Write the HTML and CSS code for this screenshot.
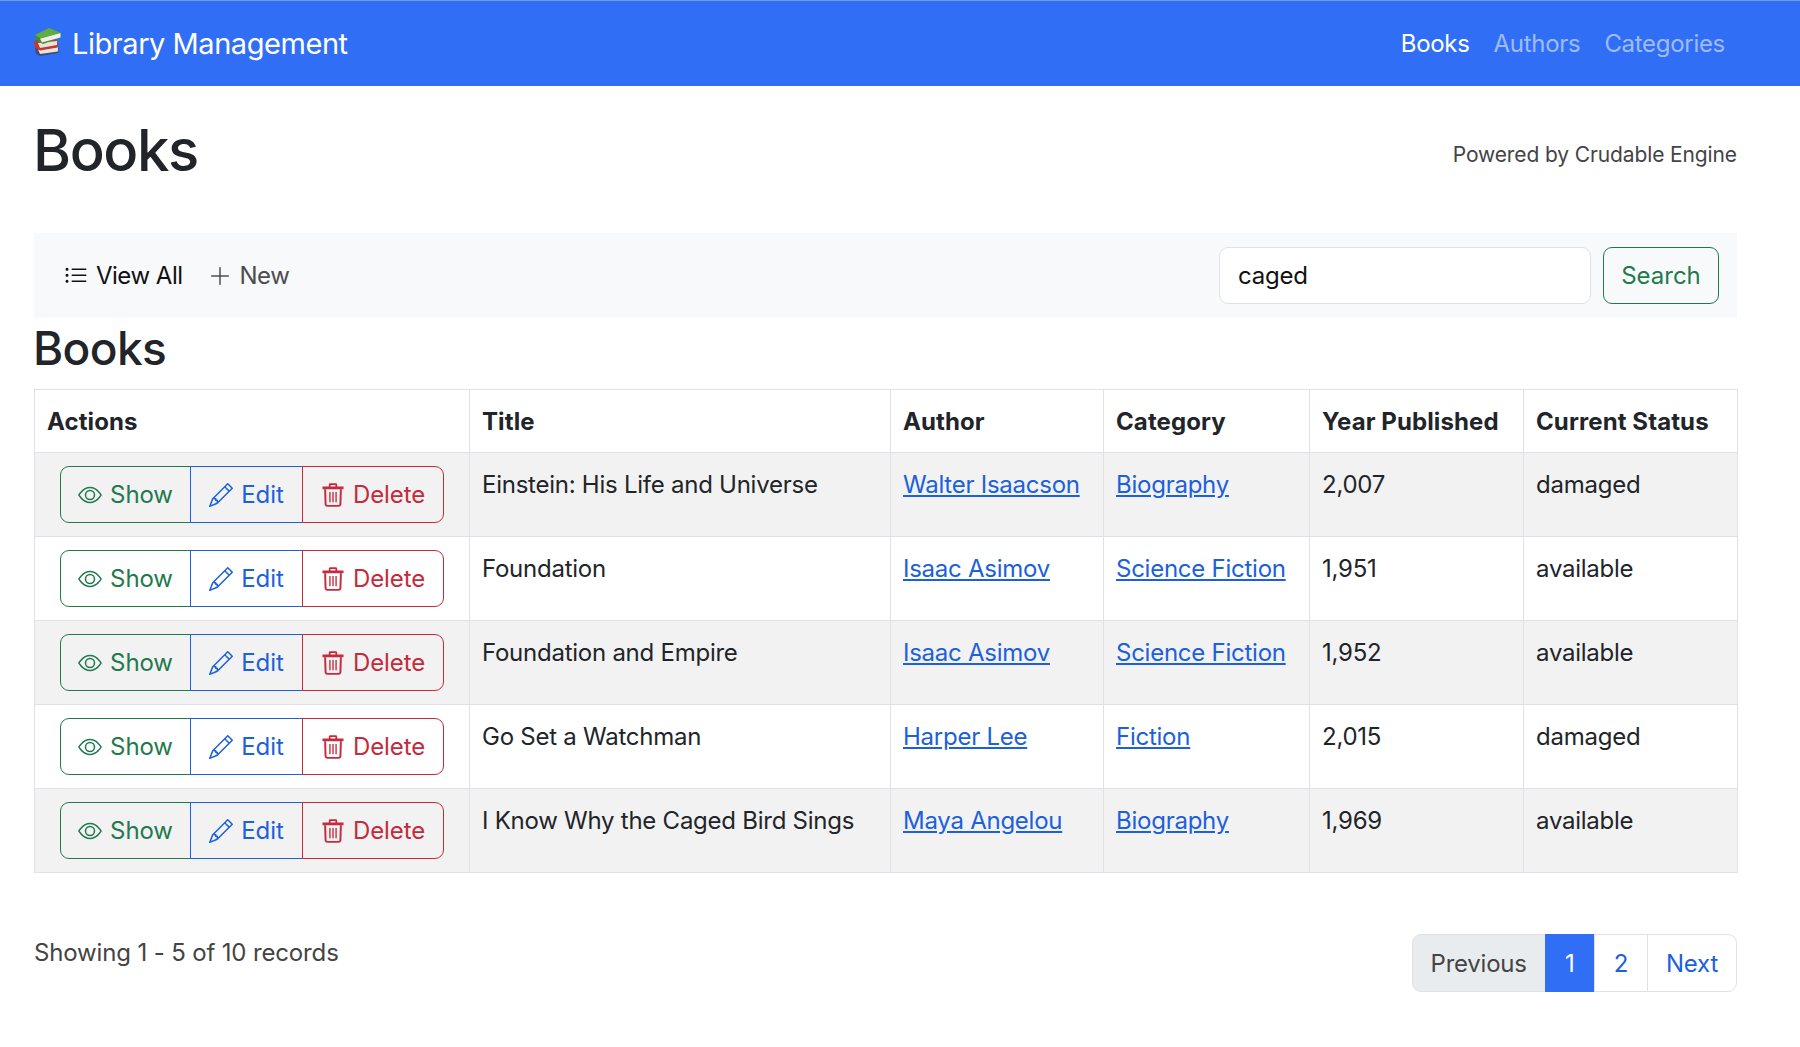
FILE: index.html
```html
<!DOCTYPE html>
<html lang="en">
  <head>
    <meta charset="UTF-8" />
    <title>Library Management</title>
    <link rel="stylesheet" href="styles.css">
  </head>
  <body>
    <svg class="sprite" xmlns="http://www.w3.org/2000/svg">
      <symbol id="i-eye" viewBox="0 0 16 16">
        <path d="M16 8s-3-5.5-8-5.5S0 8 0 8s3 5.5 8 5.5S16 8 16 8zM1.173 8a13.133 13.133 0 0 1 1.66-2.043C4.12 4.668 5.88 3.5 8 3.5c2.12 0 3.879 1.168 5.168 2.457A13.133 13.133 0 0 1 14.828 8c-.058.087-.122.183-.195.288-.335.48-.83 1.12-1.465 1.755C11.879 11.332 10.119 12.5 8 12.5c-2.12 0-3.879-1.168-5.168-2.457A13.134 13.134 0 0 1 1.172 8z"/>
        <path d="M8 5.5a2.5 2.5 0 1 0 0 5 2.5 2.5 0 0 0 0-5zM4.5 8a3.5 3.5 0 1 1 7 0 3.5 3.5 0 0 1-7 0z"/>
      </symbol>
      <symbol id="i-pencil" viewBox="0 0 16 16">
        <path d="M12.146.146a.5.5 0 0 1 .708 0l3 3a.5.5 0 0 1 0 .708l-10 10a.5.5 0 0 1-.168.11l-5 2a.5.5 0 0 1-.65-.65l2-5a.5.5 0 0 1 .11-.168l10-10zM11.207 2.5 13.5 4.793 14.793 3.5 12.5 1.207 11.207 2.5zm1.586 3L10.5 3.207 4 9.707V10h.5a.5.5 0 0 1 .5.5v.5h.5a.5.5 0 0 1 .5.5v.5h.293l6.5-6.5zm-9.761 5.175-.106.106-1.528 3.821 3.821-1.528.106-.106A.5.5 0 0 1 5 12.5V12h-.5a.5.5 0 0 1-.5-.5V11h-.5a.5.5 0 0 1-.468-.325z"/>
      </symbol>
      <symbol id="i-trash" viewBox="0 0 16 16">
        <path d="M1 2.4h14v1.8H1zM5.2 2.4V1.2c0-.6.4-1 1-1h3.6c.6 0 1 .4 1 1v1.2H9.6v-1H6.4v1z"/>
        <path d="M2.1 4.2h1.3l.3 9.8c0 .4.3.6.7.6h7.2c.4 0 .7-.2.7-.6l.3-9.8h1.3l-.3 10c-.1.9-.8 1.6-1.8 1.6H4.2c-1 0-1.7-.7-1.8-1.6z"/>
        <path d="M5.5 6h.9v6.8h-.9zM7.55 6h.9v6.8h-.9zM9.6 6h.9v6.8h-.9z"/>
      </symbol>
      <symbol id="i-list" viewBox="0 0 16 16">
        <path d="M5 11.5a.5.5 0 0 1 .5-.5h9a.5.5 0 0 1 0 1h-9a.5.5 0 0 1-.5-.5zm0-4a.5.5 0 0 1 .5-.5h9a.5.5 0 0 1 0 1h-9a.5.5 0 0 1-.5-.5zm0-4a.5.5 0 0 1 .5-.5h9a.5.5 0 0 1 0 1h-9a.5.5 0 0 1-.5-.5zm-3 1a1 1 0 1 0 0-2 1 1 0 0 0 0 2zm0 4a1 1 0 1 0 0-2 1 1 0 0 0 0 2zm0 4a1 1 0 1 0 0-2 1 1 0 0 0 0 2z"/>
      </symbol>
      <symbol id="i-plus" viewBox="0 0 16 16">
        <path d="M8 2a.5.5 0 0 1 .5.5v5h5a.5.5 0 0 1 0 1h-5v5a.5.5 0 0 1-1 0v-5h-5a.5.5 0 0 1 0-1h5v-5A.5.5 0 0 1 8 2z"/>
      </symbol>
    </svg>

    <nav class="navbar">
      <a class="brand" href="#">
        <svg class="brand-icon" viewBox="0 0 28 28" aria-hidden="true">
          <path d="M1 20 21 17 25 20 24.5 25 6 28 2 26z" fill="#3f4a78"/>
          <path d="M4 21.5 24 19 24 23.5 6 26z" fill="#e8e4dc"/>
          <path d="M0 13 19 10 24 14 23.5 19.5 6 22.5 1 20z" fill="#c0392b"/>
          <path d="M4 15 23 13 23 17 6 20z" fill="#e8e4dc"/>
          <path d="M1 7 15 0 27 5 26.5 9.5 9 16 2 12z" fill="#3f8f35"/>
          <path d="M6 10.5 26.5 5 26.5 9.5 8 14.5z" fill="#f1efe6"/>
          <path d="M1 7 15 0 26 4.5 7 10.5z" fill="#5fae45"/>
        </svg>
        Library Management
      </a>
      <div class="nav-links">
        <a class="nav-link active" href="#">Books</a>
        <a class="nav-link" href="#">Authors</a>
        <a class="nav-link" href="#">Categories</a>
      </div>
    </nav>

    <main class="container">
      <header class="page-head">
        <h1>Books</h1>
        <span class="powered">Powered by Crudable Engine</span>
      </header>

      <div class="toolbar">
        <div class="toolbar-links">
          <a class="tool-link current" href="#"><svg class="icon"><use href="#i-list"/></svg>View All</a>
          <a class="tool-link" href="#"><svg class="icon"><use href="#i-plus"/></svg>New</a>
        </div>
        <form class="search">
          <input class="search-input" type="text" value="caged" />
          <button class="search-button" type="button">Search</button>
        </form>
      </div>

      <h2>Books</h2>

      <table class="books">
        <thead>
          <tr>
            <th>Actions</th>
            <th>Title</th>
            <th>Author</th>
            <th>Category</th>
            <th>Year Published</th>
            <th>Current Status</th>
          </tr>
        </thead>
        <tbody>
          <tr>
            <td>
              <div class="btn-group">
                <a class="btn show" href="#"><svg class="icon"><use href="#i-eye"/></svg>Show</a>
                <a class="btn edit" href="#"><svg class="icon"><use href="#i-pencil"/></svg>Edit</a>
                <a class="btn del" href="#"><svg class="icon"><use href="#i-trash"/></svg>Delete</a>
              </div>
            </td>
            <td>Einstein: His Life and Universe</td>
            <td><a href="#">Walter Isaacson</a></td>
            <td><a href="#">Biography</a></td>
            <td>2,007</td>
            <td>damaged</td>
          </tr>
          <tr>
            <td>
              <div class="btn-group">
                <a class="btn show" href="#"><svg class="icon"><use href="#i-eye"/></svg>Show</a>
                <a class="btn edit" href="#"><svg class="icon"><use href="#i-pencil"/></svg>Edit</a>
                <a class="btn del" href="#"><svg class="icon"><use href="#i-trash"/></svg>Delete</a>
              </div>
            </td>
            <td>Foundation</td>
            <td><a href="#">Isaac Asimov</a></td>
            <td><a href="#">Science Fiction</a></td>
            <td>1,951</td>
            <td>available</td>
          </tr>
          <tr>
            <td>
              <div class="btn-group">
                <a class="btn show" href="#"><svg class="icon"><use href="#i-eye"/></svg>Show</a>
                <a class="btn edit" href="#"><svg class="icon"><use href="#i-pencil"/></svg>Edit</a>
                <a class="btn del" href="#"><svg class="icon"><use href="#i-trash"/></svg>Delete</a>
              </div>
            </td>
            <td>Foundation and Empire</td>
            <td><a href="#">Isaac Asimov</a></td>
            <td><a href="#">Science Fiction</a></td>
            <td>1,952</td>
            <td>available</td>
          </tr>
          <tr>
            <td>
              <div class="btn-group">
                <a class="btn show" href="#"><svg class="icon"><use href="#i-eye"/></svg>Show</a>
                <a class="btn edit" href="#"><svg class="icon"><use href="#i-pencil"/></svg>Edit</a>
                <a class="btn del" href="#"><svg class="icon"><use href="#i-trash"/></svg>Delete</a>
              </div>
            </td>
            <td>Go Set a Watchman</td>
            <td><a href="#">Harper Lee</a></td>
            <td><a href="#">Fiction</a></td>
            <td>2,015</td>
            <td>damaged</td>
          </tr>
          <tr>
            <td>
              <div class="btn-group">
                <a class="btn show" href="#"><svg class="icon"><use href="#i-eye"/></svg>Show</a>
                <a class="btn edit" href="#"><svg class="icon"><use href="#i-pencil"/></svg>Edit</a>
                <a class="btn del" href="#"><svg class="icon"><use href="#i-trash"/></svg>Delete</a>
              </div>
            </td>
            <td>I Know Why the Caged Bird Sings</td>
            <td><a href="#">Maya Angelou</a></td>
            <td><a href="#">Biography</a></td>
            <td>1,969</td>
            <td>available</td>
          </tr>
        </tbody>
      </table>

      <footer class="table-foot">
        <span class="records">Showing 1 - 5 of 10 records</span>
        <ul class="pagination">
          <li class="page disabled">Previous</li>
          <li class="page active">1</li>
          <li class="page">2</li>
          <li class="page">Next</li>
        </ul>
      </footer>
    </main>
  </body>
</html>
```

FILE: styles.css
```css
/* Base */
* {
  box-sizing: border-box;
  margin: 0;
  padding: 0;
}
body {
  font-family: Inter, "Liberation Sans", sans-serif;
  font-size: 24px;
  line-height: 36px;
  letter-spacing: -0.25px;
  color: #212529;
  background: #fff;
}
a {
  color: #1c60dc;
}
.sprite {
  display: none;
}
.icon {
  width: 24px;
  height: 24px;
  fill: currentColor;
  flex: none;
}

/* Navbar */
.navbar {
  display: flex;
  align-items: center;
  justify-content: space-between;
  height: 86px;
  padding: 0 75px 0 34px;
  background: #306ef6;
  border-top: 1px solid #6f9bf8;
}
.brand {
  display: flex;
  align-items: center;
  gap: 10px;
  color: #fff;
  font-size: 29px;
  letter-spacing: -0.45px;
  text-decoration: none;
}
.brand-icon {
  width: 28px;
  height: 28px;
  margin-top: -4px;
}
.nav-links {
  display: flex;
  gap: 24px;
  padding-top: 1px;
}
.nav-link {
  color: rgba(255, 255, 255, 0.55);
  letter-spacing: -0.3px;
  text-decoration: none;
}
.nav-link.active {
  color: #fff;
}

/* Page */
.container {
  padding: 0 63px 0 34px;
}
.page-head {
  display: flex;
  align-items: center;
  justify-content: space-between;
  height: 147px;
}
h1 {
  font-size: 58px;
  font-weight: 500;
  line-height: 72px;
  letter-spacing: -1.4px;
  margin: -20px 0 0 -1px;
}
.powered {
  font-size: 21px;
  letter-spacing: -0.12px;
  color: #444;
  margin-top: -9px;
}

/* Toolbar */
.toolbar {
  display: flex;
  align-items: center;
  justify-content: space-between;
  height: 85px;
  padding: 0 18px 0 30px;
  background: #f8f9fa;
}
.toolbar-links {
  display: flex;
  gap: 25px;
}
.tool-link {
  display: flex;
  align-items: center;
  gap: 8px;
  color: #4d4d4d;
  letter-spacing: -0.5px;
  text-decoration: none;
}
.tool-link.current {
  color: #111;
}
.search {
  display: flex;
  gap: 12px;
}
.search-input {
  width: 372px;
  height: 57px;
  padding: 0 18px;
  font: inherit;
  letter-spacing: inherit;
  color: #111;
  background: #fff;
  border: 1.5px solid #dee2e6;
  border-radius: 9px;
}
.search-button {
  width: 116px;
  height: 57px;
  font: inherit;
  color: #1f7a4d;
  background: transparent;
  border: 1.5px solid #1f7a4d;
  border-radius: 9px;
}
h2 {
  font-size: 46px;
  font-weight: 500;
  line-height: 58px;
  letter-spacing: -0.6px;
  margin: 1px 0 12px -1px;
}

/* Table */
.books {
  width: 1703px;
  table-layout: fixed;
  border-collapse: collapse;
}
.books th,
.books td {
  padding: 14px 12px 12px;
  text-align: left;
  vertical-align: top;
  border: 1.5px solid #dee2e6;
}
.books th {
  font-weight: 700;
  line-height: 36px;
  letter-spacing: 0.1px;
}
.books th:nth-child(1) { width: 435px; }
.books th:nth-child(2) { width: 421px; }
.books th:nth-child(3) { width: 213px; }
.books th:nth-child(4) { width: 206px; }
.books th:nth-child(5) { width: 214px; }
.books th:nth-child(6) { width: 214px; }
.books tbody tr:nth-child(odd) td {
  background: #f2f2f2;
}
.books td {
  height: 84px;
}
.books td:first-child {
  padding-top: 13px;
}
.btn-group {
  display: flex;
  width: 384px;
  height: 57px;
  margin-left: 13px;
}
.btn {
  display: flex;
  align-items: center;
  justify-content: center;
  gap: 8px;
  letter-spacing: -0.1px;
  text-decoration: none;
  border: 1.5px solid;
}
.btn.show {
  width: 131px;
  color: #1f7a4d;
  border-radius: 9px 0 0 9px;
}
.btn.edit {
  width: 113px;
  margin-left: -1px;
  color: #1c60dc;
}
.btn.del {
  width: 142px;
  margin-left: -1px;
  color: #c42b3c;
  border-radius: 0 9px 9px 0;
}

/* Footer */
.table-foot {
  display: flex;
  justify-content: space-between;
  align-items: flex-start;
  margin-top: 61px;
}
.records {
  color: #444;
  letter-spacing: -0.15px;
  margin-top: 1px;
}
.pagination {
  display: flex;
  list-style: none;
  height: 58px;
}
.page {
  display: flex;
  align-items: center;
  padding: 2px 18px 0;
  color: #1c60dc;
  border: 1.5px solid #dee2e6;
  margin-left: -1px;
}
.page.disabled {
  color: #444;
  background: #e9ecef;
  border-radius: 9px 0 0 9px;
  margin-left: 0;
}
.page.active {
  justify-content: center;
  width: 50px;
  color: #fff;
  background: #306ef6;
  border-color: #306ef6;
}
.page.active + .page {
  padding: 2px 19px 0;
}
.page:last-child {
  border-radius: 0 9px 9px 0;
}
```
